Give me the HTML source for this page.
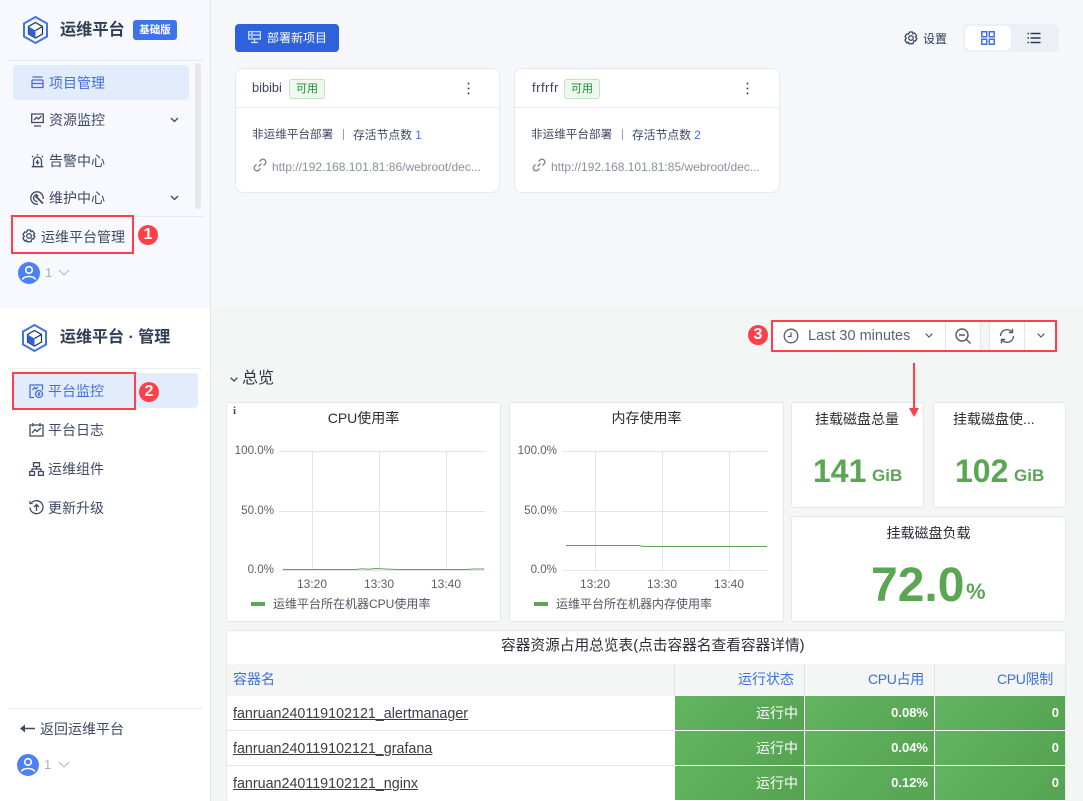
<!DOCTYPE html>
<html lang="zh"><head><meta charset="utf-8"><title>运维平台</title>
<style>
*{box-sizing:border-box}
html,body{margin:0;padding:0}
body{width:1083px;height:801px;overflow:hidden;position:relative;background:#f4f5f5;font-family:"Liberation Sans","Noto Sans CJK SC",sans-serif;color:#2d3a52}
.a{position:absolute}
.t{position:absolute;white-space:nowrap;line-height:20px}
svg{position:absolute;overflow:visible}
.s{fill:none;stroke:#3d4a63;stroke-width:1.3}
.b{fill:none;stroke:#3f6fe0;stroke-width:1.3}
.red{position:absolute;border:2px solid #ff4048}
.num{position:absolute;width:20px;height:20px;border-radius:50%;background:#ff4048;color:#fff;font-size:16px;line-height:20px;text-align:center;font-weight:700}
.panel{position:absolute;background:#fff;border:1px solid #e6e8e8;border-radius:3px}
.card{position:absolute;background:#fff;border:1px solid #e6e9f0;border-radius:8px;width:265px;height:125px;top:68px}
.tag{position:absolute;top:10px;height:20px;width:36px;background:#edf9ee;border:1px solid #bde6c0;border-radius:3px;color:#1f8a34;font-size:11px;line-height:18px;text-align:center}
.ax{font-size:11.6px;color:#5b5f66;text-align:right;width:50px}
.tm{font-size:12px;color:#5b5f66}
.ttl{font-size:14px;color:#2b2d33;text-align:center}
.cell{position:absolute;background:linear-gradient(135deg,#62b560,#55a351);color:#fff;font-size:13px;text-align:right;padding-right:6px;line-height:34px;font-weight:700}
.cell.z{font-size:14px;font-weight:400;padding-right:6px}
.hd{position:absolute;top:664px;height:32px;background:#f4f5f5;color:#3d71d9;font-size:14px;line-height:30px;border-right:1px solid #e0e2e2;text-align:right;padding-right:10px}
.lnk{position:absolute;left:233px;font-size:14.3px;color:#3a3d43;text-decoration:underline;line-height:20px;white-space:nowrap}
.rowl{position:absolute;left:227px;width:448px;height:1px;background:#e6e8e8}
.m{font-size:14px;color:#3d4a63}
</style></head><body>

<!-- Top section -->
<div class="a" style="left:0;top:0;width:1083px;height:308px;background:#f6f7fa"></div>
<div class="a" style="left:0;top:0;width:211px;height:308px;background:#f8f9fe;border-right:1px solid #e3e5ec"></div>

<svg style="left:22px;top:15px" width="28" height="30" viewBox="0 0 28 30"><path d="M13.5 2 25 8.500V21.500L13.500 28 2 21.500V8.500Z" fill="none" stroke="#3f75e8" stroke-width="2"/><path d="M13.500 7.500 20.500 11.500V19L13.500 23 6.500 19V11.500Z" fill="#f8f9fe" stroke="#1f3558" stroke-width="1.200"/><path d="M6.500 11.500 13.500 15.500V23L6.500 19Z" fill="#2f62d9"/><path d="M13.500 15.500 20.500 11.500" stroke="#1f3558" stroke-width="1.200"/></svg>
<div class="t" style="left:60px;top:20px;font-size:16.200px;font-weight:700;color:#2f3d55">运维平台</div>
<div class="a" style="left:133px;top:20px;width:44px;height:20px;background:#3d74ea;border-radius:3px;color:#fff;font-size:10.500px;line-height:20px;text-align:center;font-weight:700">基础版</div>
<div class="a" style="left:9px;top:60px;width:194px;height:1px;background:#e6e8ef"></div>
<div class="a" style="left:13px;top:65px;width:176px;height:35px;background:#e3ecfc;border-radius:4px"></div>
<div class="a" style="left:195px;top:63px;width:6px;height:146px;background:#e6e8ec;border-radius:3px"></div>

<svg style="left:31px;top:76px" width="13" height="13" viewBox="0 0 13 13"><path d="M1.500 1H11.500M.7 4H12.300M1 4.500V11.500H12V4.500M1 7.500H12" class="b"/></svg>
<div class="t m" style="left:49px;top:73px;color:#3f6fe0">项目管理</div>
<svg style="left:31px;top:113px" width="13" height="14" viewBox="0 0 13 14"><path d="M.7 1H12.300V9.500H.7ZM3 13H10M3 7 5.500 4.500 7.500 6 10.500 3" class="s"/></svg>
<div class="t m" style="left:49px;top:110px">资源监控</div>
<svg style="left:170px;top:117px" width="9" height="6" viewBox="0 0 9 6"><path d="M1 1 4.500 4.500 8 1" class="s"/></svg>
<svg style="left:31px;top:154px" width="13" height="14" viewBox="0 0 13 14"><path d="M2.500 12.500V7A4 4 0 0 1 10.500 7V12.500M.7 12.700H12.300M6.500 0V1.500M1 2 2.200 3.200M12 2 10.800 3.200M7 6 5.500 8.500H7.500L6 10.500" class="s"/></svg>
<div class="t m" style="left:49px;top:151px">告警中心</div>
<svg style="left:30px;top:191px" width="14" height="14" viewBox="0 0 14 14"><path d="M8 13.200H7A6.200 6.200 0 1 1 13.200 7V8M7 3.500A3.500 3.500 0 0 0 7 10.500H7.500" class="s"/><path d="M6 5.500 13 12.500M8 4 5.500 6.500" fill="none" stroke="#3d4a63" stroke-width="1.800"/></svg>
<div class="t m" style="left:49px;top:188px">维护中心</div>
<svg style="left:170px;top:195px" width="9" height="6" viewBox="0 0 9 6"><path d="M1 1 4.500 4.500 8 1" class="s"/></svg>
<div class="a" style="left:9px;top:216px;width:194px;height:1px;background:#e6e8ef"></div>
<div class="red" style="left:11px;top:215px;width:123px;height:39px"></div>
<svg style="left:22px;top:229px" width="14" height="14" viewBox="0 0 14 14"><path d="M5.600 1H8.400L8.900 2.700 10.600 2 12.600 4.600 11.500 6 12.900 7.500 11.500 10 10 9.700 9 12.700H5L4.400 11.200 2.500 11.700.9 9 2.300 7.300 1 5.500 2.700 3 4.500 3.200Z" class="s"/><circle cx="7" cy="7" r="2.300" class="s"/></svg>
<div class="t m" style="left:41px;top:227px">运维平台管理</div>
<div class="num" style="left:138px;top:225px">1</div>
<svg style="left:18px;top:262px" width="22" height="22" viewBox="0 0 22 22"><circle cx="11" cy="11" r="11" fill="#4c80f5"/><circle cx="11" cy="8" r="3.300" fill="none" stroke="#fff" stroke-width="1.600"/><path d="M4.500 17.500C5.500 13.500 16.500 13.500 17.500 17.500" fill="none" stroke="#fff" stroke-width="1.600"/></svg>
<div class="t" style="left:45px;top:263px;font-size:13px;color:#a9aeb8">1</div>
<svg style="left:58px;top:269px" width="12" height="7" viewBox="0 0 12 7"><path d="M1 1 6 6 11 1" fill="none" stroke="#b3b8c2" stroke-width="1.100"/></svg>

<div class="a" style="left:235px;top:24px;width:104px;height:28px;background:#2d62dc;border-radius:4px"></div>
<svg style="left:248px;top:31px" width="13" height="14" viewBox="0 0 13 14"><path d="M.7 .7H12.300V4H.7ZM.7 4V8H12.300V4M3 11.500H10M6.500 8V11.500M3 2.300H5M3 6H5" fill="none" stroke="#dbe5fa" stroke-width="1.200"/></svg>
<div class="t" style="left:267px;top:28px;font-size:12px;color:#fff">部署新项目</div>

<svg style="left:904px;top:31px" width="14" height="14" viewBox="0 0 14 14"><path d="M5.600 1H8.400L8.900 2.700 10.600 2 12.600 4.600 11.500 6 12.900 7.500 11.500 10 10 9.700 9 12.700H5L4.400 11.200 2.500 11.700.9 9 2.300 7.300 1 5.500 2.700 3 4.500 3.200Z" class="s"/><circle cx="7" cy="7" r="2.300" class="s"/></svg>
<div class="t" style="left:923px;top:29px;font-size:12px;color:#2d3a52">设置</div>
<div class="a" style="left:963px;top:24px;width:96px;height:28px;background:#eceff5;border-radius:5px"></div>
<div class="a" style="left:965px;top:26px;width:46px;height:24px;background:#fff;border-radius:5px"></div>
<svg style="left:981px;top:31px" width="14" height="14" viewBox="0 0 14 14"><path d="M.8 .8H5.700V5.700H.8ZM8.300 .8H13.200V5.700H8.300ZM.8 8.300H5.700V13.200H.8ZM8.300 8.300H13.200V13.200H8.300Z" fill="none" stroke="#3f6fe0" stroke-width="1.500"/></svg>
<svg style="left:1027px;top:32px" width="14" height="12" viewBox="0 0 14 12"><path d="M3.500 1.500H13.500M3.500 6H13.500M3.500 10.500H13.500M.5 1.500H2M.5 6H2M.5 10.500H2" fill="none" stroke="#2d3a52" stroke-width="1.400"/></svg>

<!-- cards -->
<div class="card" style="left:235px">
 <div class="t" style="left:16px;top:9px;font-size:12.800px;color:#3a4356">bibibi</div>
 <div class="tag" style="left:53px">可用</div>
 <svg style="left:231px;top:13px" width="3" height="13" viewBox="0 0 3 13"><circle cx="1.500" cy="1.500" r="1" fill="#3d4a63"/><circle cx="1.500" cy="6.500" r="1" fill="#3d4a63"/><circle cx="1.500" cy="11.500" r="1" fill="#3d4a63"/></svg>
 <div class="a" style="left:0;top:38px;width:263px;height:1px;background:#e6e9f0"></div>
 <div class="t" style="left:16px;top:56px;font-size:11.600px;color:#3d4a63">非运维平台部署</div>
 <div class="a" style="left:107px;top:60px;width:1px;height:11px;background:#9aa2b0"></div>
 <div class="t" style="left:117px;top:56px;font-size:11.800px;color:#3d4a63">存活节点数 <span style="color:#3f6fe0">1</span></div>
 <svg style="left:17px;top:89px" width="14" height="14" viewBox="0 0 14 14"><path d="M5.500 8.500 8.500 5.500M6.500 3.500 8 2A2.800 2.800 0 0 1 12 6L10.500 7.500M7.500 10.500 6 12A2.800 2.800 0 0 1 2 8L3.500 6.500" fill="none" stroke="#7a8394" stroke-width="1.300"/></svg>
 <div class="t" style="left:36px;top:88px;font-size:12px;color:#8a8f9c">http://192.168.101.81:86/webroot/dec...</div>
</div>
<div class="card" style="left:514px;width:266px">
 <div class="t" style="left:17px;top:9px;font-size:13px;letter-spacing:.5px;color:#3a4356">frfrfr</div>
 <div class="tag" style="left:49px">可用</div>
 <svg style="left:231px;top:13px" width="3" height="13" viewBox="0 0 3 13"><circle cx="1.500" cy="1.500" r="1" fill="#3d4a63"/><circle cx="1.500" cy="6.500" r="1" fill="#3d4a63"/><circle cx="1.500" cy="11.500" r="1" fill="#3d4a63"/></svg>
 <div class="a" style="left:0;top:38px;width:264px;height:1px;background:#e6e9f0"></div>
 <div class="t" style="left:16px;top:56px;font-size:11.600px;color:#3d4a63">非运维平台部署</div>
 <div class="a" style="left:107px;top:60px;width:1px;height:11px;background:#9aa2b0"></div>
 <div class="t" style="left:117px;top:56px;font-size:11.800px;color:#3d4a63">存活节点数 <span style="color:#3f6fe0">2</span></div>
 <svg style="left:17px;top:89px" width="14" height="14" viewBox="0 0 14 14"><path d="M5.500 8.500 8.500 5.500M6.500 3.500 8 2A2.800 2.800 0 0 1 12 6L10.500 7.500M7.500 10.500 6 12A2.800 2.800 0 0 1 2 8L3.500 6.500" fill="none" stroke="#7a8394" stroke-width="1.300"/></svg>
 <div class="t" style="left:36px;top:88px;font-size:12px;color:#8a8f9c">http://192.168.101.81:85/webroot/dec...</div>
</div>

<!-- Bottom section -->
<div class="a" style="left:0;top:308px;width:1083px;height:493px;background:#f4f5f5"></div>
<div class="a" style="left:0;top:308px;width:211px;height:493px;background:#fff;border-right:1px solid #e3e5ec"></div>

<svg style="left:21px;top:323px" width="28" height="30" viewBox="0 0 28 30"><path d="M13.500 2 25 8.500V21.500L13.500 28 2 21.500V8.500Z" fill="none" stroke="#3f75e8" stroke-width="2"/><path d="M13.500 7.500 20.500 11.500V19L13.500 23 6.500 19V11.500Z" fill="#fff" stroke="#1f3558" stroke-width="1.200"/><path d="M6.500 11.500 13.500 15.500V23L6.500 19Z" fill="#2f62d9"/><path d="M13.500 15.500 20.500 11.500" stroke="#1f3558" stroke-width="1.200"/></svg>
<div class="t" style="left:60px;top:328px;font-size:16px;font-weight:700;color:#2f3d55">运维平台 · 管理</div>
<div class="a" style="left:8px;top:368px;width:194px;height:1px;background:#eceef2"></div>
<div class="a" style="left:13px;top:373px;width:185px;height:35px;background:#e3ecfc;border-radius:4px"></div>
<div class="red" style="left:12px;top:372px;width:124px;height:38px"></div>
<svg style="left:29px;top:384px" width="15" height="15" viewBox="0 0 15 15"><path d="M5 13.500H1V1H13.500V6M3.500 6 5.500 3.500 7 5 9 3" class="b"/><circle cx="10" cy="10" r="3.500" class="b"/><path d="M10 8V12M8.500 10H11.500" class="b"/></svg>
<div class="t m" style="left:48px;top:381px;color:#3f6fe0">平台监控</div>
<div class="num" style="left:139px;top:382px">2</div>
<svg style="left:29px;top:423px" width="15" height="14" viewBox="0 0 15 14"><path d="M1 2H14V13H1ZM4 0V3.500M11 0V3.500M3 10 6 6.500 8 8.500 12 5" class="s"/></svg>
<div class="t m" style="left:48px;top:420px">平台日志</div>
<svg style="left:29px;top:462px" width="15" height="14" viewBox="0 0 15 14"><path d="M4.500 .7H10.500V4.500H4.500ZM.7 9.500H5.500V13.300H.7ZM9.500 9.500H14.300V13.300H9.500ZM3 9.500V7H12V9.500M7.500 4.500V7" class="s"/></svg>
<div class="t m" style="left:48px;top:459px">运维组件</div>
<svg style="left:29px;top:500px" width="15" height="15" viewBox="0 0 15 15"><path d="M2.500 3A6.500 6.500 0 1 1 1 7.500M1 1V3.500H3.500M7.500 11V5M5 7 7.500 4.500 10 7" class="s"/></svg>
<div class="t m" style="left:48px;top:498px">更新升级</div>

<div class="a" style="left:8px;top:708px;width:194px;height:1px;background:#e6e8ef"></div>
<svg style="left:20px;top:724px" width="15" height="9" viewBox="0 0 15 9"><path d="M0 4.500 5 .5V8.500Z" fill="#3d4a63"/><path d="M4 4.500H15" stroke="#3d4a63" stroke-width="1.500"/></svg>
<div class="t m" style="left:40px;top:719px">返回运维平台</div>
<svg style="left:17px;top:754px" width="22" height="22" viewBox="0 0 22 22"><circle cx="11" cy="11" r="11" fill="#4c80f5"/><circle cx="11" cy="8" r="3.300" fill="none" stroke="#fff" stroke-width="1.600"/><path d="M4.500 17.500C5.500 13.500 16.500 13.500 17.500 17.500" fill="none" stroke="#fff" stroke-width="1.600"/></svg>
<div class="t" style="left:44px;top:755px;font-size:13px;color:#a9aeb8">1</div>
<svg style="left:58px;top:761px" width="12" height="7" viewBox="0 0 12 7"><path d="M1 1 6 6 11 1" fill="none" stroke="#b3b8c2" stroke-width="1.100"/></svg>

<!-- Toolbar -->
<div class="a" style="left:771px;top:320px;width:286px;height:32px;background:#fff"></div>
<div class="a" style="left:945px;top:322px;width:1px;height:28px;background:#e4e6e6"></div>
<div class="a" style="left:980px;top:322px;width:10px;height:28px;background:#f4f5f5;border-left:1px solid #e4e6e6;border-right:1px solid #e4e6e6"></div>
<div class="a" style="left:1024px;top:322px;width:1px;height:28px;background:#e4e6e6"></div>
<div class="red" style="left:771px;top:320px;width:286px;height:32px"></div>
<div class="num" style="left:748px;top:325px">3</div>
<svg style="left:783px;top:328px" width="16" height="16" viewBox="0 0 16 16"><circle cx="8" cy="8" r="6.800" fill="none" stroke="#555a63" stroke-width="1.300"/><path d="M8 4.500V8.500H4.800" fill="none" stroke="#555a63" stroke-width="1.300"/></svg>
<div class="t" style="left:808px;top:326px;font-size:14.500px;color:#5a6272">Last 30 minutes</div>
<svg style="left:925px;top:333px" width="8" height="5" viewBox="0 0 8 5"><path d="M.7 .7 4 4 7.300 .7" fill="none" stroke="#555a63" stroke-width="1.200"/></svg>
<svg style="left:955px;top:328px" width="17" height="17" viewBox="0 0 17 17"><circle cx="7" cy="7" r="6" fill="none" stroke="#555a63" stroke-width="1.400"/><path d="M4 7H10M11.500 11.500 15.500 15.500" fill="none" stroke="#555a63" stroke-width="1.400"/></svg>
<svg style="left:999px;top:328px" width="16" height="16" viewBox="0 0 16 16"><path d="M1.500 8A6.500 6.500 0 0 1 13 4M14.500 8A6.500 6.500 0 0 1 3 12M13.500 .8V4.500H9.800M2.500 15.200V11.500H6.200" fill="none" stroke="#555a63" stroke-width="1.400"/></svg>
<svg style="left:1037px;top:333px" width="8" height="5" viewBox="0 0 8 5"><path d="M.7 .7 4 4 7.300 .7" fill="none" stroke="#555a63" stroke-width="1.200"/></svg>

<svg style="left:230px;top:377px" width="8" height="5" viewBox="0 0 8 5"><path d="M.7 .7 4 4 7.300 .7" fill="none" stroke="#3a3d43" stroke-width="1.200"/></svg>
<div class="t" style="left:242px;top:369px;font-size:16px;color:#2f3238">总览</div>

<!-- Panels -->
<div class="panel" style="left:226px;top:402px;width:275px;height:220px"></div>
<div class="t" style="left:233px;top:401px;font-size:11px;font-weight:700;font-family:'Liberation Serif',serif;color:#4a4a4a">i</div>
<div class="t ttl" style="left:226px;top:408px;width:275px">CPU使用率</div>
<div class="t ax" style="left:224px;top:441px">100.0%</div>
<div class="t ax" style="left:224px;top:501px">50.0%</div>
<div class="t ax" style="left:224px;top:560px">0.0%</div>
<svg style="left:226px;top:402px" width="275" height="220"><path d="M53 49.500H259M53 109.500H259M53 168.500H259M86.500 49V169M153.500 49V169M220.500 49V169" fill="none" stroke="#e3e4e4"/><path d="M57 167.500H130L136 166.800 142 167.200 150 166.500 160 167 170 167.500H240L247 167 258 167" fill="none" stroke="#5aa653"/></svg>
<div class="t tm" style="left:297px;top:574px">13:20</div>
<div class="t tm" style="left:364px;top:574px">13:30</div>
<div class="t tm" style="left:431px;top:574px">13:40</div>
<div class="a" style="left:251px;top:602px;width:14px;height:4px;background:#5aa653"></div>
<div class="t" style="left:273px;top:594px;font-size:12px;color:#53575e">运维平台所在机器CPU使用率</div>

<div class="panel" style="left:509px;top:402px;width:275px;height:220px"></div>
<div class="t ttl" style="left:509px;top:408px;width:275px">内存使用率</div>
<div class="t ax" style="left:507px;top:441px">100.0%</div>
<div class="t ax" style="left:507px;top:501px">50.0%</div>
<div class="t ax" style="left:507px;top:560px">0.0%</div>
<svg style="left:509px;top:402px" width="275" height="220"><path d="M53 49.500H259M53 109.500H259M53 168.500H259M86.500 49V169M153.500 49V169M220.500 49V169" fill="none" stroke="#e3e4e4"/><path d="M57 143.500H130L134 144.500H258" fill="none" stroke="#5aa653"/></svg>
<div class="t tm" style="left:580px;top:574px">13:20</div>
<div class="t tm" style="left:647px;top:574px">13:30</div>
<div class="t tm" style="left:714px;top:574px">13:40</div>
<div class="a" style="left:534px;top:602px;width:14px;height:4px;background:#5aa653"></div>
<div class="t" style="left:556px;top:594px;font-size:12px;color:#53575e">运维平台所在机器内存使用率</div>

<div class="panel" style="left:791px;top:402px;width:133px;height:106px"></div>
<div class="t ttl" style="left:815px;top:409px">挂载磁盘总量</div>
<div class="t" style="left:813px;top:452px;font-size:32px;line-height:38px;font-weight:700;color:#5aa653">141</div>
<div class="t" style="left:872px;top:465px;font-size:17px;line-height:22px;font-weight:700;color:#5aa653">GiB</div>

<div class="panel" style="left:933px;top:402px;width:133px;height:106px"></div>
<div class="t ttl" style="left:953px;top:409px">挂载磁盘使...</div>
<div class="t" style="left:955px;top:452px;font-size:32px;line-height:38px;font-weight:700;color:#5aa653">102</div>
<div class="t" style="left:1014px;top:465px;font-size:17px;line-height:22px;font-weight:700;color:#5aa653">GiB</div>

<div class="panel" style="left:791px;top:516px;width:275px;height:106px"></div>
<div class="t ttl" style="left:791px;top:523px;width:275px">挂载磁盘负载</div>
<div class="t" style="left:871px;top:558px;font-size:48px;line-height:56px;font-weight:700;color:#5aa653">72.0</div>
<div class="t" style="left:966px;top:580px;font-size:22px;line-height:24px;font-weight:700;color:#5aa653">%</div>

<svg style="left:909px;top:363px" width="12" height="60" viewBox="0 0 12 60"><path d="M5 0V48" stroke="#ff4048" stroke-width="2"/><path d="M0 45H10L5 54Z" fill="#ff4048"/></svg>

<!-- Table -->
<div class="panel" style="left:226px;top:630px;width:840px;height:171px;border-bottom:0"></div>
<div class="t ttl" style="left:501px;top:636px;font-size:14.700px">容器资源占用总览表(点击容器名查看容器详情)</div>
<div class="hd" style="left:227px;width:448px;text-align:left;padding-left:6px">容器名</div>
<div class="hd" style="left:675px;width:130px">运行状态</div>
<div class="hd" style="left:805px;width:130px;letter-spacing:-.3px">CPU占用</div>
<div class="hd" style="left:935px;width:130px;border-right:0;padding-right:12px;letter-spacing:-.3px">CPU限制</div>

<div class="lnk" style="top:704px">fanruan240119102121_alertmanager</div>
<div class="rowl" style="top:730px"></div>
<div class="lnk" style="top:739px">fanruan240119102121_grafana</div>
<div class="rowl" style="top:765px"></div>
<div class="lnk" style="top:774px">fanruan240119102121_nginx</div>

<div class="cell z" style="left:675px;top:696px;width:129px;height:34px">运行中</div>
<div class="cell" style="left:805px;top:696px;width:129px;height:34px">0.08%</div>
<div class="cell" style="left:935px;top:696px;width:130px;height:34px">0</div>
<div class="cell z" style="left:675px;top:731px;width:129px;height:34px">运行中</div>
<div class="cell" style="left:805px;top:731px;width:129px;height:34px">0.04%</div>
<div class="cell" style="left:935px;top:731px;width:130px;height:34px">0</div>
<div class="cell z" style="left:675px;top:766px;width:129px;height:34px">运行中</div>
<div class="cell" style="left:805px;top:766px;width:129px;height:34px">0.12%</div>
<div class="cell" style="left:935px;top:766px;width:130px;height:34px">0</div>

</body></html>
